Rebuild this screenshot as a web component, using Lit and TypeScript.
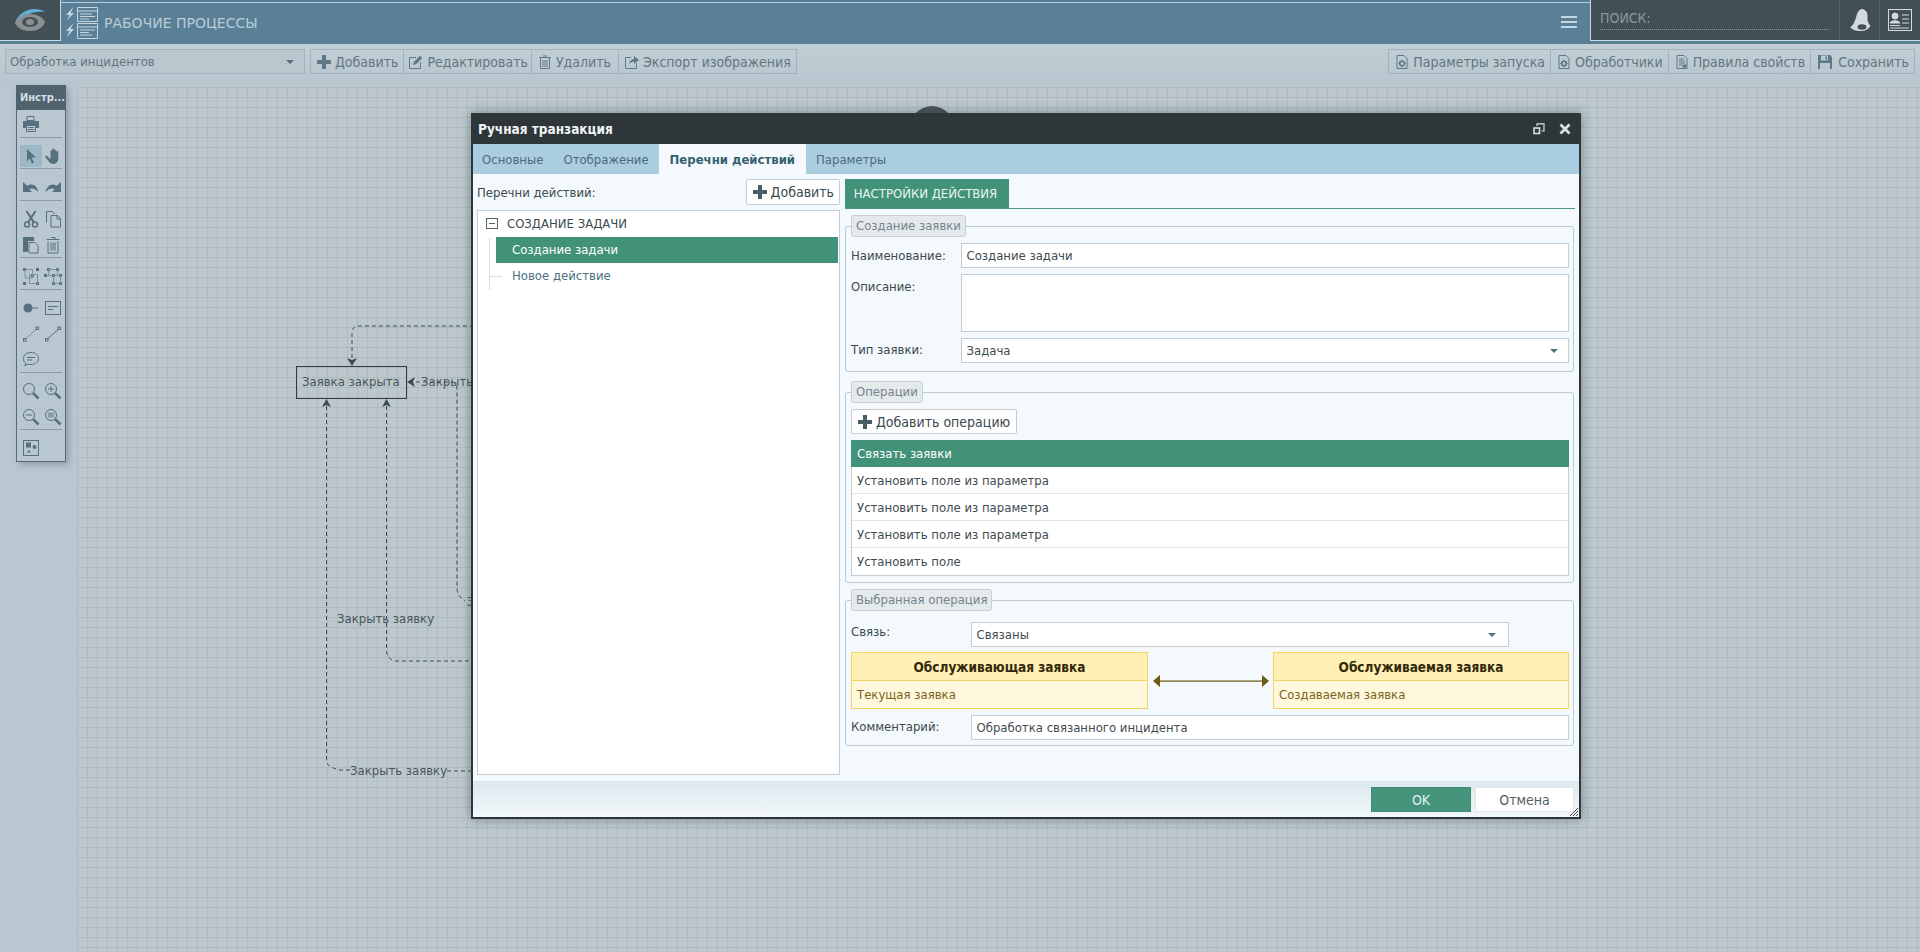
import { LitElement, html, css, svg } from "lit";
import { customElement } from "lit/decorators.js";

const i16 = (c: unknown, color = "#5f7885") => html`<svg class="ic" width="16" height="16" viewBox="0 0 16 16" fill="none" stroke="${color}" stroke-width="1">${c}</svg>`;
const plus = (color: string) => html`<svg class="ic" width="16" height="16" viewBox="0 0 16 16" fill="${color}"><path d="M6 1h4v5h5v4h-5v5H6v-5H1V6h5z"/></svg>`;
const edit = svg`<path d="M8 3.5H1.5v11h11V8"/><path d="M5 11l.8-3L12 1.8l2.2 2.2L8 10.2z" fill="#5f7885" stroke="none"/>`;
const trash = svg`<path d="M3.5 4v10.5h9V4M2 3.5h12M6 2h4M6 6v7M8 6v7M10 6v7"/>`;
const exportI = svg`<path d="M7 3.5H1.5v11h11V9"/><path d="M5 10c.5-3 2.5-5 5-5V2l5 4-5 4V7.5c-2 0-3.5 1-5 2.5z" fill="#5f7885" stroke="none"/>`;
const gearDoc = svg`<path d="M3 1.5h7l3 3v10H3z"/><circle cx="8" cy="9.5" r="2.3" stroke-width="1.6"/><path d="M8 5.8v1.4M8 11.8v1.4M4.3 9.5h1.4M10.3 9.5h1.4M5.5 7l1 1M9.5 11l1 1M5.5 12l1-1M9.5 8l1-1" stroke-width="1"/>`;
const rulesDoc = svg`<path d="M3 1.5h7l3 3v10H3z"/><path d="M5 5h5M5 7h6M5 9h6M5 11h3"/><rect x="9" y="11" width="3" height="2" fill="#5f7885"/>`;
const floppy = svg`<path d="M1 1h12l2 2v12H1z" fill="#5f7885" stroke="none"/><rect x="4" y="1.5" width="7" height="5" fill="#b9c7cf" stroke="none"/><rect x="8.5" y="2.5" width="1.5" height="3" fill="#5f7885" stroke="none"/><rect x="3" y="9" width="10" height="6" fill="#b9c7cf" stroke="none"/>`;

const T = "#56707e";
const tb = (c: unknown) => html`<svg width="18" height="18" viewBox="0 0 18 18" fill="none" stroke="${T}" stroke-width="1">${c}</svg>`;
const tools: unknown[][] = [
  [svg`<path d="M5 1.5h7v4H5z"/><path d="M1 6h16v7h-3v-2H4v2H1z" fill="${T}" stroke="none"/><path d="M4.5 10.5h9v6h-9zM6 12.5h6M6 14.5h6"/>`],
  [svg`<path d="M5 2l9 8.5H9.5l2.5 5-2 1-2.3-5.2L5 14.5z" fill="${T}" stroke="none"/>`, svg`<path d="M3 9l3.5 3V4.2c0-1.3 1.8-1.3 1.8 0V2.6c0-1.4 2-1.4 2 0v1c0-1.3 2-1.3 2 .2v1.2c0-1.2 2-1.2 2 .2V11c0 3.5-2 6-5 6-2.8 0-4-1.5-5-3.2L1.3 10.2C.8 9 2 8 3 9z" fill="${T}" stroke="none"/>`],
  [svg`<path d="M1 4v10h9L7.5 11.5C9.5 9.8 12.5 10.5 16.5 14 15 8 10.5 4.500 5.500 8z" fill="${T}" stroke="none"/>`, svg`<path d="M17 4v10H8l2.500-2.500C8.500 9.800 5.500 10.500 1.500 14 3 8 7.500 4.500 12.500 8z" fill="${T}" stroke="none"/>`],
  [svg`<circle cx="5" cy="14.500" r="2.500" stroke-width="1.500"/><circle cx="13" cy="14.500" r="2.500" stroke-width="1.500"/><path d="M6 12.500L13.500 1M12 12.500L4.500 1" stroke-width="2"/>`, svg`<path d="M2.500 12.500V1.500h6l2 2.500M7 5.500h6.500l3 3v8.500H7z"/><path d="M13 5.500v3.500h3.500"/>`],
  [svg`<path d="M1 1h11v4H6v11H1z" fill="${T}" stroke="none"/><path d="M7 6.500h6l3 3v7.500H7z"/>`, svg`<path d="M4 5v12h10V5M2.500 3.500h13M7 1.500h4v2M7 6.500v8M9 6.500v8M11 6.500v8"/>`],
  [svg`<g fill="${T}" stroke="none"><rect x="1" y="1" width="3" height="3"/><rect x="14" y="1" width="3" height="3"/><rect x="1" y="15" width="3" height="3"/><rect x="9" y="7" width="3" height="3"/><rect x="14" y="15" width="3" height="3"/></g><path d="M3 2.500h7.500V11H3zM7.500 7.500h8v9h-8z" stroke="#7c929d"/>`, svg`<g fill="${T}" stroke="none"><rect x="3" y="1" width="3" height="3"/><rect x="12" y="1" width="3" height="3"/><rect x="0" y="7" width="3" height="3"/><rect x="8" y="7" width="3" height="3"/><rect x="15" y="7" width="3" height="3"/><rect x="8" y="15" width="3" height="3"/><rect x="15" y="15" width="3" height="3"/></g><path d="M4.500 2.500h9M2 8.500h14M9.500 8.500v8h7V8.500M4.500 2.500V8M13.500 2.500V8" stroke="#7c929d"/>`],
  [svg`<circle cx="6" cy="9" r="4.500" fill="${T}" stroke="none"/><path d="M10 9h6"/>`, svg`<rect x="1.500" y="2.500" width="15" height="13"/><path d="M4 7.500h10M4 10.500h5"/>`],
  [svg`<rect x="1.500" y="13.500" width="2.500" height="2.500"/><rect x="14" y="2" width="2.500" height="2.500"/><path d="M4 13.500L14 4.500" stroke="#8296a1"/>`, svg`<rect x="1.500" y="13.500" width="2.500" height="2.500"/><rect x="14" y="2" width="2.500" height="2.500"/><path d="M4 13.500L14 4.500" stroke="#56707e"/>`],
  [svg`<path d="M9 2.500c4.500 0 7.500 2.500 7.500 6s-3 6-7.500 6c-1 0-2 0-3-.4L3 16l.5-3C2 12 1.500 10.500 1.500 8.500c0-3.500 3-6 7.500-6z"/><path d="M5 7.500h8M5 10h5"/>`],
  [svg`<circle cx="7" cy="7" r="5.500"/><path d="M11 11l5.500 5.500" stroke-width="2.500"/>`, svg`<circle cx="7" cy="7" r="5.500"/><path d="M11 11l5.500 5.500" stroke-width="2.500"/><path d="M4 7h6M7 4v6"/>`],
  [svg`<circle cx="7" cy="7" r="5.500"/><path d="M11 11l5.500 5.500" stroke-width="2.500"/><path d="M4 7h6"/>`, svg`<circle cx="7" cy="7" r="5.500"/><path d="M11 11l5.500 5.500" stroke-width="2.500"/><path d="M5 4.500v5M7 4.500v5M9 4.500v5"/>`],
  [svg`<rect x="1.500" y="1.500" width="15" height="15"/><rect x="4" y="3.500" width="5" height="5" fill="${T}" stroke="none"/><circle cx="12.500" cy="8" r="2" fill="${T}" stroke="none"/><path d="M5 13.500l2-2.500 2 2.500z" fill="${T}" stroke="none"/>`],
];
const sepAfter = [0, 1, 2, 4, 5, 8, 10];

@customElement("app-root")
export class AppRoot extends LitElement {
  static styles = css`
    :host { display: block; height: 100vh; overflow: hidden; position: relative; font: 13px "DejaVu Sans", sans-serif; font-stretch: 75%; color: #3c4a50; background: #b9c8d0; }
    * { box-sizing: border-box; }
    .page { display: flex; flex-direction: column; height: 100%; }
    .header { height: 44px; flex: none; display: flex; background: #5a8097; }
    .logo { width: 61px; height: 41px; background: #434f56; border-right: 1px solid #c8dae4; border-bottom: 1px solid #c8dae4; display: flex; align-items: center; justify-content: center; }
    .hmid { flex: 1; height: 42px; border-top: 1px solid #b5ccd9; margin-top: 2px; display: flex; align-items: center; padding: 0 13px 2px 5px; background: #5a8097; }
    .app-ico { flex: none; margin-right: 6px; }
    .title { flex: 1; font-size: 14px; font-stretch: 100%; color: #b9ccd6; }
    .hsearch { width: 330px; height: 41px; background: #434f56; border-left: 1px solid #c8dae4; border-bottom: 1px solid #c8dae4; display: flex; }
    .s-wrap { width: 248px; padding: 0 10px 0 9px; display: flex; flex-direction: column; justify-content: center; }
    .s-in { font-size: 14px; color: #8d989e; border-bottom: 1px dotted #8d989e; height: 20px; padding-top: 1px; line-height: 14px; }
    .h-btn { width: 40px; border-left: 1px solid #56626a; display: flex; align-items: center; justify-content: center; }
    .h-btn.last { flex: 1; }
    .toolbar { height: 41px; flex: none; display: flex; align-items: flex-start; padding: 5px 5px 0; background: linear-gradient(#c1cfd6, #b7c6ce); }
    .sel0 { width: 300px; height: 25px; border: 1px solid #a4b3bb; background: #b9c7cf; display: flex; align-items: center; padding: 0 10px 0 4px; color: #63767f; }
    .grow { flex: 1; }
    .caret { width: 0; height: 0; border: 4px solid transparent; border-top: 4px solid #56707e; border-bottom: 0; margin-left: auto; flex: none; }
    .group { display: flex; height: 25px; border: 1px solid #a4b3bb; margin-left: 5px; }
    .group button { all: unset; box-sizing: border-box; display: flex; align-items: center; gap: 3px; padding: 0 5px; color: #63767f; font: 14px "DejaVu Sans", sans-serif; font-stretch: 75%; border-left: 1px solid #a4b3bb; white-space: nowrap; }
    .group button:first-child { border-left: 0; }
    .group button.ed { padding: 0 3px 0 4px; }
    .group button.del { padding-right: 7px; }
    .group button.save { padding-left: 6px; gap: 5px; }
    .ic { flex: none; }
    .work { flex: 1; display: flex; min-height: 0; }
    .side { width: 77px; flex: none; padding-left: 16px; }
    .toolbox { width: 50px; height: 377px; background: #b9c8d0; border: 1px solid #586974; box-shadow: 3px 3px 6px rgba(70,90,100,.35); }
    .tb-h { height: 25px; margin: -1px -1px 0; background: #506470; color: #d5dee3; font-size: 11px; font-weight: bold; line-height: 26px; padding-left: 4px; white-space: nowrap; }
    .tb-rows { padding: 1px 3px 0; }
    .tb-row { display: grid; grid-template-columns: 22px 22px; height: 25.500px; align-items: center; }
    .tb-cell { display: flex; height: 22px; align-items: center; justify-content: center; }
    .tb-cell.on { background: #9db8c5; }
    .tb-sep { height: 1px; background: #8a9ca6; margin: 0 0 5.300px; }
    .canvas { flex: 1; margin-top: 2px; position: relative; background-color: #bcc8ce;
      background-image: linear-gradient(#adbcb9 1px, transparent 1px), linear-gradient(90deg, #adbcb9 1px, transparent 1px);
      background-size: 10px 10px; }
    .diagram { position: absolute; inset: 0; width: 100%; height: 100%; }
    .diagram text { font: 13px "DejaVu Sans", sans-serif; font-stretch: 75%; fill: #4a555b; }
    .modal { position: absolute; left: 471px; top: 113px; width: 1110px; height: 706px; display: flex; flex-direction: column; background: #f3f9fc; border: 2px solid #2f3639; border-top: 0; box-shadow: 0 0 10px rgba(40,50,60,.45); }
    .m-title { height: 31px; flex: none; margin: 0 -2px; padding: 0 10px 0 7px; background: #2f3639; color: #eef3f5; font-size: 13.500px; font-weight: bold; display: flex; align-items: center; justify-content: space-between; }
    .m-btns { display: flex; gap: 14px; align-items: center; }
    .tabs { height: 30px; flex: none; display: flex; background: #abcde0; }
    .tab { padding: 0 10px; display: flex; align-items: center; color: #4d6a79; }
    .tab:first-child { padding-left: 9px; }
    .tab.on { background: #f3f9fc; color: #38606f; font-weight: bold; padding: 0 11px; }
    .m-body { flex: 1; min-height: 0; display: flex; gap: 5px; padding: 5px 4px 6px; }
    .left { width: 363px; flex: none; display: flex; flex-direction: column; }
    .left-h { height: 26px; flex: none; display: flex; align-items: center; justify-content: space-between; margin-bottom: 5px; }
    .btn { display: flex; align-items: center; gap: 3px; height: 26px; padding: 0 5px; background: #fff; border: 1px solid #c3cdd2; border-radius: 2px; color: #3c4a50; font-size: 14px; white-space: nowrap; }
    .tree { flex: 1; background: #fff; border: 1px solid #c3cdd2; position: relative; }
    .t-root { height: 26px; display: flex; align-items: center; padding: 0 0 2px 8px; gap: 9px; color: #3c4a50; }
    .minus { width: 12px; height: 11px; border: 1px solid #56646c; position: relative; }
    .minus::after { content: ""; position: absolute; left: 2px; right: 2px; top: 4px; height: 1px; background: #56646c; }
    .t-item { height: 26px; margin-left: 18px; margin-right: 1px; padding: 0 0 2px 16px; display: flex; align-items: center; color: #4d6f80; }
    .t-item.on { background: #429279; color: #fff; }
    .t-lines { position: absolute; left: 11px; top: 27px; width: 14px; height: 52px; border-left: 1px solid #d3dce0; }
    .t-lines::after { content: ""; position: absolute; left: 0; width: 12px; top: 38px; height: 1px; background: #d3dce0; }
    .right { flex: 1; min-width: 0; }
    .r-tabs { height: 30px; border-bottom: 1px solid #4f9580; margin-bottom: 6px; }
    .r-tab { display: inline-flex; height: 29px; width: 164px; padding-right: 3px; align-items: center; justify-content: center; background: #429279; color: #eaf6f2; }
    fieldset { margin: 0 1px 0 0; padding: 0 4px 0 5px; border: 1px solid #bccad2; border-radius: 3px; min-width: 0; }
    legend { height: 22px; padding: 0 4px; margin-left: 0; background: #e4e9ec; border: 1px solid #c8d0d4; border-radius: 3px; color: #75848c; line-height: 20px; }
    .f1 { padding-top: 6px; padding-bottom: 8px; margin-bottom: 9px; }
    .f2 { padding-top: 6px; padding-bottom: 6px; margin-bottom: 6px; }
    .f3 { padding-top: 11px; padding-bottom: 5px; }
    .row { display: flex; margin-bottom: 6px; }
    .row:last-child { margin-bottom: 0; }
    .lab { width: 110px; height: 25px; flex: none; line-height: 26px; color: #3c4a50; }
    .lab.w { width: 120px; line-height: 24px; }
    .lab.top { line-height: 19px; }
    .lab.t { line-height: 24px; }
    .inp { flex: 1; min-width: 0; height: 25px; background: #fff; border: 1px solid #c3cdd2; padding: 0 5px 0 4.500px; color: #3f4c52; display: flex; align-items: center; }
    .inp.ta { height: 58px; }
    .row.r5 { margin-bottom: 5px; }
    .inp.narrow { flex: none; width: 538px; }
    .f2 .btn { width: 166px; height: 25px; margin-bottom: 6px; }
    .grid { border: 1px solid #c3cdd2; border-top: 0; background: #fff; }
    .g-r { height: 27px; padding-left: 5px; display: flex; align-items: center; border-bottom: 1px solid #e0e6ea; color: #3f4c52; }
    .g-r:last-child { border-bottom: 0; }
    .g-r.on { background: #429279; color: #fff; margin: 0 -1px; padding-left: 6px; border-bottom: 0; }
    .link { display: flex; align-items: stretch; margin-bottom: 6px; }
    .lbox { width: 297px; flex: none; border: 1px solid #f5d560; background: #fff8dc; }
    .lbox.r { width: 296px; }
    .lbox-h { height: 28px; background: #fff0b5; border-bottom: 1px solid #f5d560; color: #33290a; font-size: 13.500px; font-weight: bold; display: flex; align-items: center; justify-content: center; }
    .lbox-b { height: 27px; padding-left: 5px; display: flex; align-items: center; color: #7a6520; }
    .arrow { flex: 1; display: flex; align-items: center; justify-content: center; }
    .m-foot { height: 36px; flex: none; background: linear-gradient(#dce8ee, #f1f7fa); display: flex; justify-content: flex-end; gap: 4px; padding: 6px 5px 0 0; position: relative; }
    .fbtn { height: 25px; width: 100px; font-size: 14px; display: flex; align-items: center; justify-content: center; }
    .fbtn.ok { background: #46947b; color: #dff2ec; border: 1px solid #3f8a72; }
    .fbtn.no { width: 99px; background: #fff; border: 1px solid #dfe6ea; color: #555e63; }
    .grip { position: absolute; right: 1px; bottom: 1px; }
  `;

  private diagram() {
    return html`<svg class="diagram" viewBox="77 87 1843 865" fill="none" stroke="#3f4a50" stroke-width="1">
      <circle cx="932" cy="128" r="22" fill="#4a5459" stroke="none"/>
      <g stroke-dasharray="4 3">
        <path d="M352 358V333q0-7 7-7H471"/>
        <path d="M326.500 406V759q0 7 7 9l5 2h12"/>
        <path d="M386.500 406V650q0 7 7 11h78"/>
        <path d="M416 382h37q4 2 4 7V588q0 8 8 13"/>
        <path d="M447 771h24"/>
      </g>
      <path d="M347 358l5 2 5-2-5 8z" fill="#3f4a50" stroke="none"/>
      <path d="M322 407l4.500-8 4.500 8-4.500-2z" fill="#3f4a50" stroke="none"/>
      <path d="M382 407l4.500-8 4.500 8-4.500-2z" fill="#3f4a50" stroke="none"/>
      <path d="M415 377l-8 5 8 5-2-5z" fill="#3f4a50" stroke="none"/>
      <rect x="296.500" y="366.500" width="110" height="32" stroke="#333c42"/>
      <text x="302" y="386" stroke="none">Заявка закрыта</text>
      <text x="421" y="386" stroke="none">Закрыть</text>
      <text x="337" y="623" stroke="none">Закрыть заявку</text>
      <text x="350" y="775" stroke="none">Закрыть заявку</text>
      <text x="467" y="606" stroke="none">З</text>
    </svg>`;
  }

  render() {
    const listRow = ["Установить поле из параметра", "Установить поле из параметра", "Установить поле из параметра", "Установить поле"];
    return html`
      <div class="page">
        <div class="header">
          <div class="logo">
            <svg width="32" height="24" viewBox="0 0 32 24">
              <path d="M1 15C4 6 12 1 20 1c5 0 9 1 11 3-6-1-13 0-18 3-5 2-9 5-12 8z" fill="#5fb0d3"/>
              <path d="M1 15c2-5 8-9 15-9 7 0 13 3 15 8-2 6-8 9-15 9-7 0-13-3-15-8z" fill="#8b8f90"/>
              <ellipse cx="16" cy="14" rx="8" ry="5" fill="#46525a"/>
              <ellipse cx="16" cy="14" rx="4" ry="3" fill="#8b8f90"/>
            </svg>
          </div>
          <div class="hmid">
            <svg class="app-ico" width="32" height="32" viewBox="0 0 32 32" fill="none" stroke="#c4d6df">
              <path d="M7.500 0L0 8h3.500L1 13l7-7H4.500zM7.500 16L0 24h3.500L1 30l7-8H4.500z" fill="#c4d6df" stroke="none"/>
              <path d="M11.500 .5h20v14h-20zM11.500 4h20M14 7h12M14 9.500h15M14 12h9M11.500 16.500h20v15h-20zM11.500 20h20M14 23h15M14 25.500h9M14 28h12"/>
            </svg>
            <div class="title">РАБОЧИЕ ПРОЦЕССЫ</div>
            <svg width="16" height="13" viewBox="0 0 16 13" fill="#c4d6df"><rect y="0" width="16" height="2"/><rect y="5" width="16" height="2"/><rect y="10" width="16" height="2"/></svg>
          </div>
          <div class="hsearch">
            <div class="s-wrap"><div class="s-in">ПОИСК:</div></div>
            <div class="h-btn">
              <svg width="22" height="25" viewBox="0 0 22 25"><path d="M13 1c4 .5 6 4 5.500 8-.5 3 .5 6 3 9-2 3-5 5-10 5-5 0-9-1.500-10-4 3-2 4.500-6 6-11 1-4 3-7 5.500-7z" fill="#d3dbdf"/><ellipse cx="13" cy="19" rx="4.500" ry="2.800" fill="#434f56"/></svg>
            </div>
            <div class="h-btn last">
              <svg width="26" height="24" viewBox="0 0 26 24" fill="none" stroke="#d3dbdf"><rect x="1.500" y="1.500" width="23" height="21"/><circle cx="8" cy="8" r="3" fill="#d3dbdf"/><path d="M3 15c1-3 9-3 10 0zM3 17.500h10M15 7h7M15 11h7M15 15h7M3 20h19" fill="#d3dbdf"/></svg>
            </div>
          </div>
        </div>
        <div class="toolbar">
          <div class="sel0">Обработка инцидентов<span class="caret"></span></div>
          <div class="group">
            <button>${plus("#5f7885")}Добавить</button>
            <button class="ed">${i16(edit)}Редактировать</button>
            <button class="del">${i16(trash)}Удалить</button>
            <button>${i16(exportI)}Экспорт изображения</button>
          </div>
          <div class="grow"></div>
          <div class="group">
            <button>${i16(gearDoc)}Параметры запуска</button>
            <button>${i16(gearDoc)}Обработчики</button>
            <button>${i16(rulesDoc)}Правила свойств</button>
            <button class="save">${i16(floppy)}Сохранить</button>
          </div>
        </div>
        <div class="work">
          <div class="side">
            <div class="toolbox">
              <div class="tb-h">Инстр...</div>
              <div class="tb-rows">
                ${tools.map((r, i) => html`
                  <div class="tb-row">${r.map((c, j) => html`<div class="tb-cell ${i === 1 && j === 0 ? "on" : ""}">${tb(c)}</div>`)}</div>
                  ${sepAfter.includes(i) ? html`<div class="tb-sep"></div>` : ""}
                `)}
              </div>
            </div>
          </div>
          <div class="canvas">${this.diagram()}</div>
        </div>
      </div>

      <div class="modal">
        <div class="m-title">
          <span>Ручная транзакция</span>
          <div class="m-btns">
            <svg width="12" height="12" viewBox="0 0 12 12" fill="none" stroke="#d8e0e4" stroke-width="1.200"><path d="M4 3V.8h7V8H8.500"/><rect x="1" y="5" width="5.500" height="5.500" stroke-width="1.600"/></svg>
            <svg width="12" height="12" viewBox="0 0 12 12" stroke="#d8e0e4" stroke-width="2.800"><path d="M1.500 1.500l9 9M10.500 1.500l-9 9"/></svg>
          </div>
        </div>
        <div class="tabs">
          <div class="tab">Основные</div><div class="tab">Отображение</div><div class="tab on">Перечни действий</div><div class="tab">Параметры</div>
        </div>
        <div class="m-body">
          <div class="left">
            <div class="left-h"><span>Перечни действий:</span><div class="btn">${plus("#4b5d66")}Добавить</div></div>
            <div class="tree">
              <div class="t-root"><span class="minus"></span>СОЗДАНИЕ ЗАДАЧИ</div>
              <div class="t-item on">Создание задачи</div>
              <div class="t-item">Новое действие</div>
              <div class="t-lines"></div>
            </div>
          </div>
          <div class="right">
            <div class="r-tabs"><div class="r-tab">НАСТРОЙКИ ДЕЙСТВИЯ</div></div>
            <fieldset class="f1">
              <legend>Создание заявки</legend>
              <div class="row"><div class="lab">Наименование:</div><div class="inp">Создание задачи</div></div>
              <div class="row"><div class="lab">Описание:</div><div class="inp ta"></div></div>
              <div class="row"><div class="lab t">Тип заявки:</div><div class="inp">Задача<span class="caret" style="margin-right:5px"></span></div></div>
            </fieldset>
            <fieldset class="f2">
              <legend>Операции</legend>
              <div class="btn">${plus("#4b5d66")}Добавить операцию</div>
              <div class="grid">
                <div class="g-r on">Связать заявки</div>
                ${listRow.map((t) => html`<div class="g-r">${t}</div>`)}
              </div>
            </fieldset>
            <fieldset class="f3">
              <legend>Выбранная операция</legend>
              <div class="row r5"><div class="lab w top">Связь:</div><div class="inp narrow">Связаны<span class="caret" style="margin-right:7px"></span></div></div>
              <div class="link">
                <div class="lbox"><div class="lbox-h">Обслуживающая заявка</div><div class="lbox-b">Текущая заявка</div></div>
                <div class="arrow">
                  <svg width="116" height="14" viewBox="0 0 116 14" fill="#6e5a10"><path d="M0 7l7-6v12zM116 7l-7-6v12z"/><rect x="6" y="6.500" width="104" height="1.200"/></svg>
                </div>
                <div class="lbox r"><div class="lbox-h">Обслуживаемая заявка</div><div class="lbox-b">Создаваемая заявка</div></div>
              </div>
              <div class="row"><div class="lab w">Комментарий:</div><div class="inp">Обработка связанного инцидента</div></div>
            </fieldset>
          </div>
        </div>
        <div class="m-foot">
          <div class="fbtn ok">OK</div><div class="fbtn no">Отмена</div>
          <svg class="grip" width="8" height="8" viewBox="0 0 8 8" stroke="#444" stroke-width="1"><path d="M0 8l8-8M3 8l5-5M6 8l2-2"/></svg>
        </div>
      </div>
    `;
  }
}
